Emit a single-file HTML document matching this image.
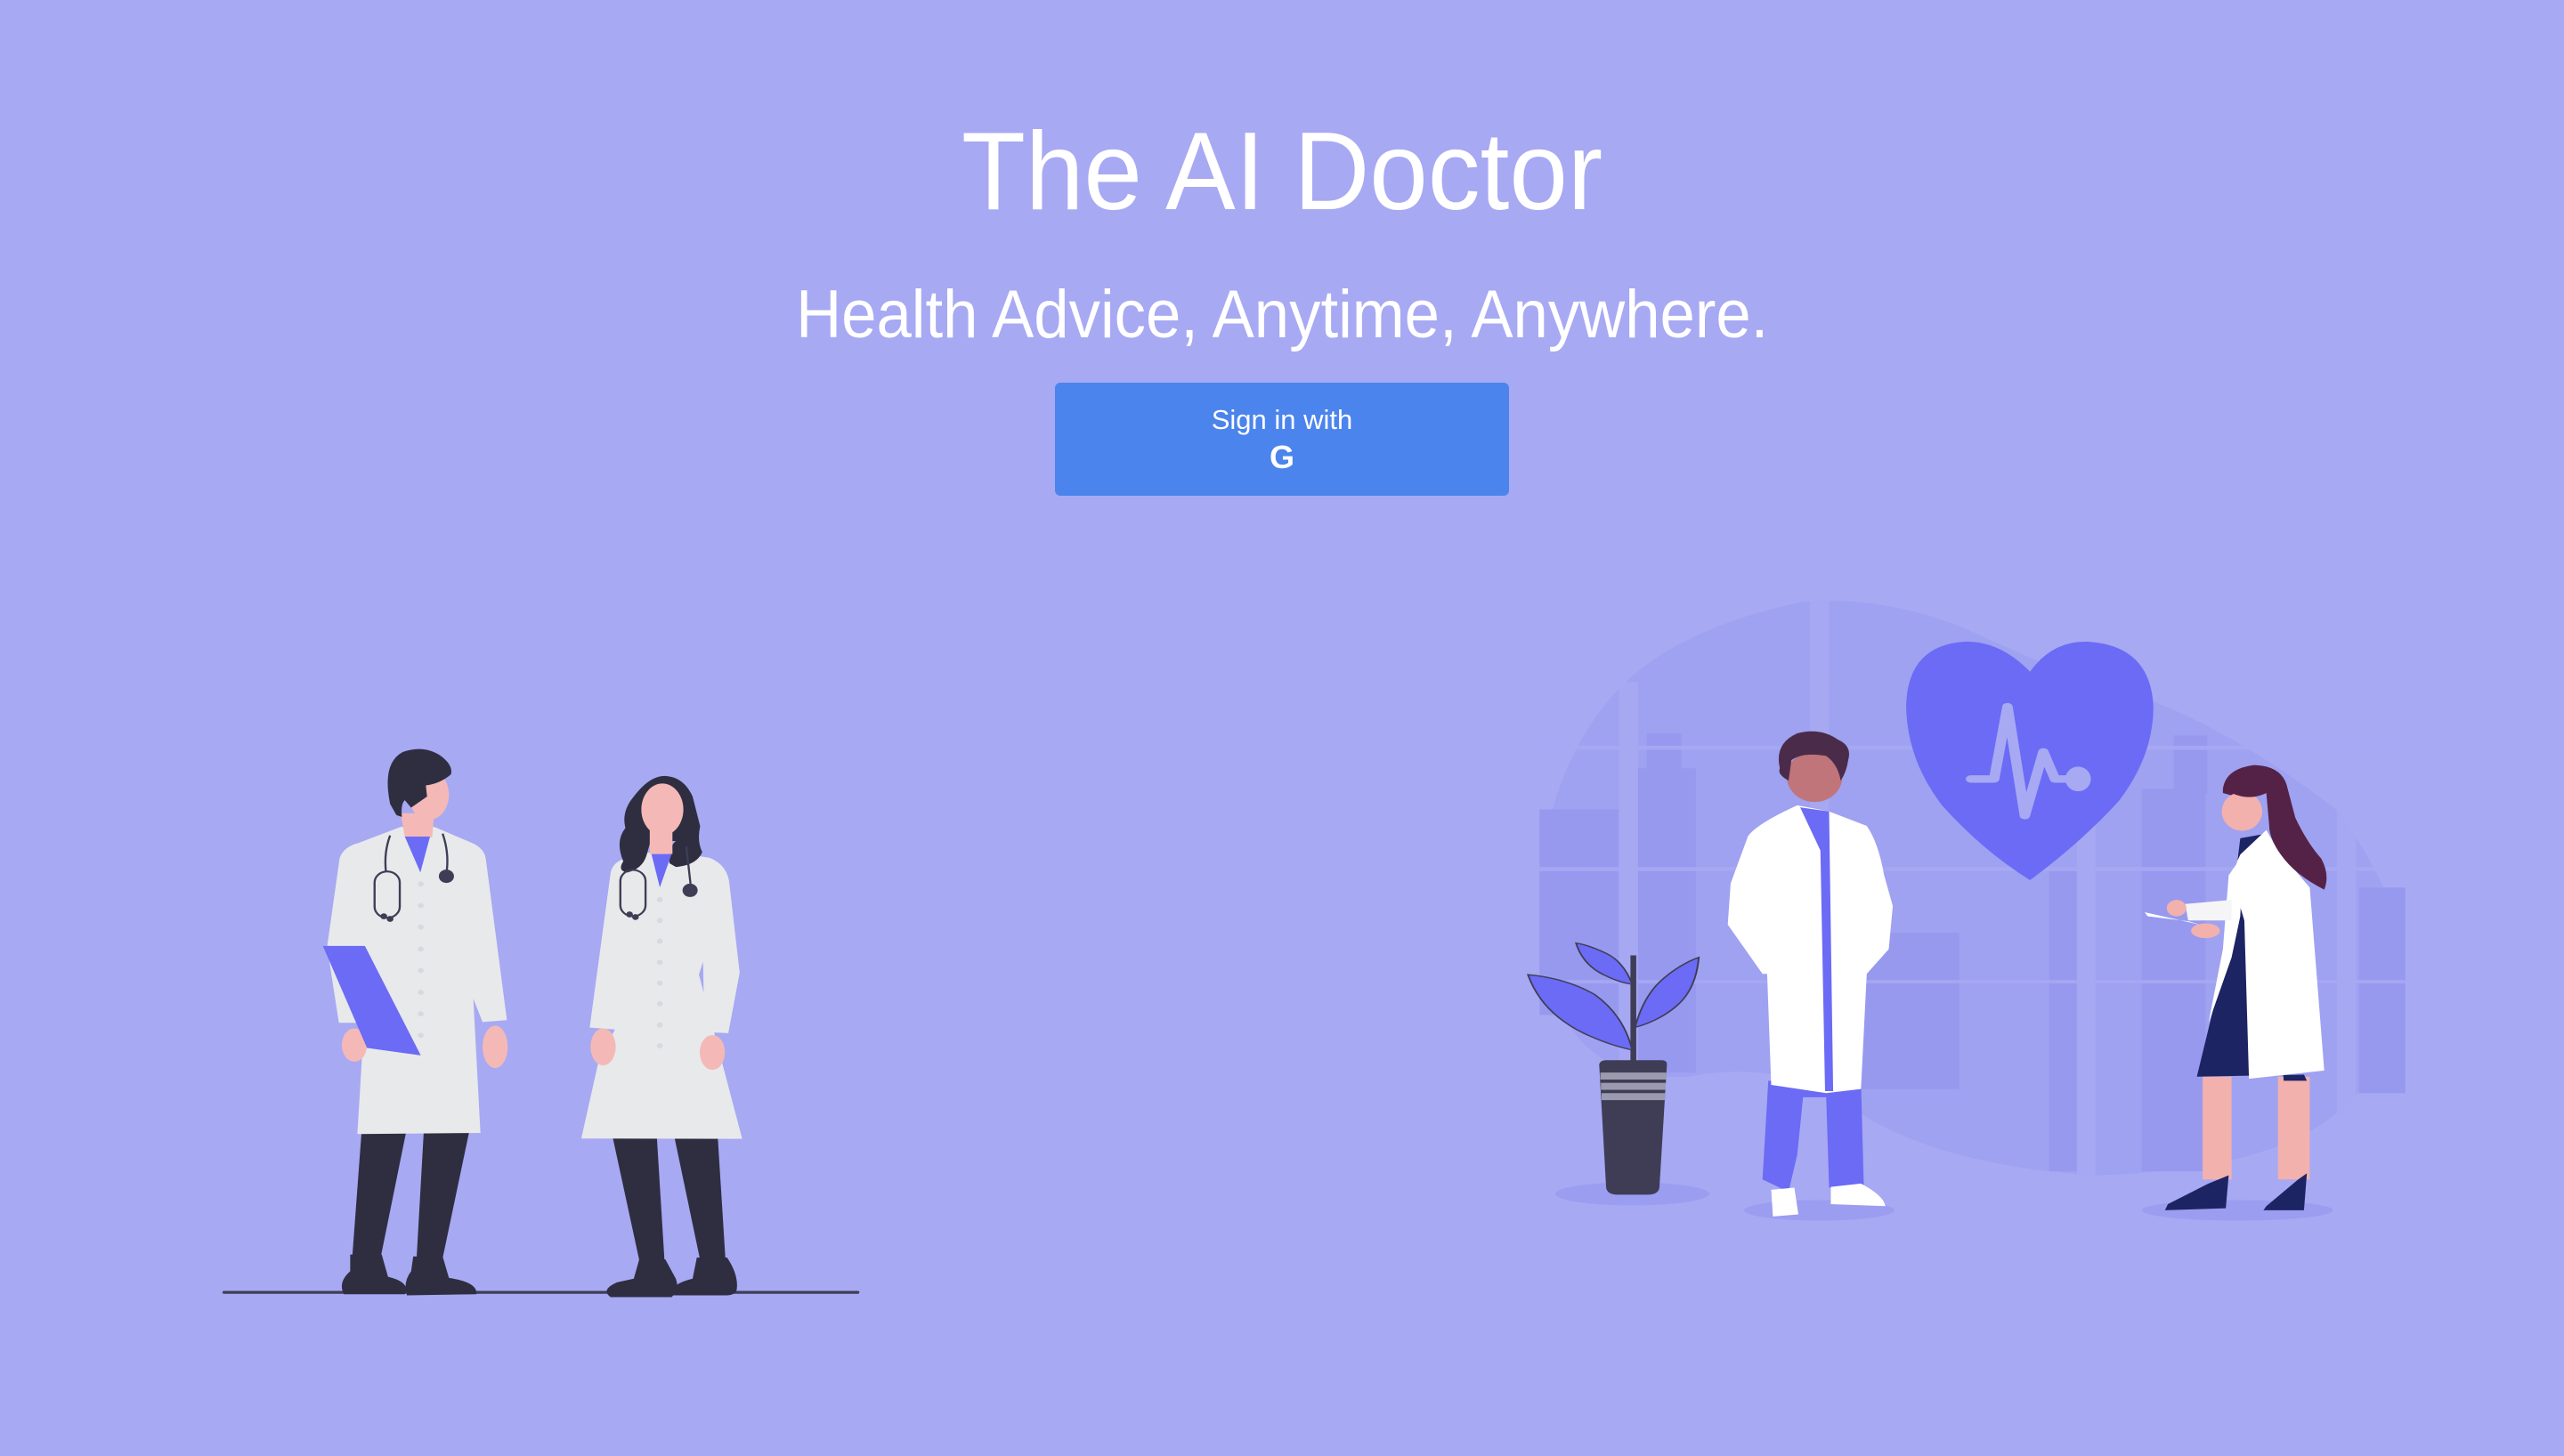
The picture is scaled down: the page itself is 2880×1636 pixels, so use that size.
<!DOCTYPE html>
<html><head><meta charset="utf-8">
<style>
html,body{margin:0;padding:0;}
body{width:2880px;height:1636px;background:#a7a9f3;position:relative;overflow:hidden;font-family:"Liberation Sans","DejaVu Sans",sans-serif;color:#fff;}
.t{position:absolute;left:0;width:2880px;text-align:center;white-space:nowrap;}
.t span{display:inline-block;}
#h1{top:118px;font-size:124px;line-height:150px;}
#h1 span{transform:scaleX(0.95);}
#h2{top:304px;font-size:76px;line-height:100px;}
#h2 span{transform:scaleX(0.93);}
#btn{position:absolute;left:1185px;top:430px;width:510px;height:127px;background:#4b84ec;border-radius:6px;text-align:center;}
#btn .a{position:absolute;top:22px;left:0;width:100%;font-size:31px;line-height:40px;}
#btn .g{position:absolute;top:62px;left:0;width:100%;font-size:36px;line-height:44px;font-weight:bold;}
svg{position:absolute;left:0;top:0;}
</style></head><body>
<div class="t" id="h1"><span>The AI Doctor</span></div>
<div class="t" id="h2"><span>Health Advice, Anytime, Anywhere.</span></div>
<div id="btn"><div class="a">Sign in with</div><div class="g">G</div></div>

<svg width="2880" height="1636" viewBox="0 0 2880 1636">
<g transform="translate(240,820) scale(0.4719,0.4167)">
  <line x1="25" y1="1517" x2="1533" y2="1517" stroke="#3f3d56" stroke-width="8" stroke-linecap="round"/>
  <polygon points="352,1085 458,1085 398,1420 330,1420" fill="#2f2e41"/>
  <polygon points="500,1085 608,1085 545,1425 483,1425" fill="#2f2e41"/>
  <path d="M325 1415 L400 1415 L415 1475 Q470 1490 455 1522 L310 1522 Q295 1490 325 1460 Z" fill="#2f2e41"/>
  <path d="M475 1420 L545 1420 L560 1478 Q630 1490 625 1522 L460 1525 Q450 1490 470 1460 Z" fill="#2f2e41"/>
  <path d="M300 345 Q310 315 345 305 L445 262 L525 262 L615 305 Q645 320 648 350 L698 783 L640 788 L618 725 L635 1087 L342 1090 L358 790 L298 790 L270 585 Z" fill="#e8e9eb"/>
  <ellipse cx="335" cy="850" rx="30" ry="45" fill="#f4b9b6"/>
  <ellipse cx="670" cy="855" rx="30" ry="57" fill="#f4b9b6"/>
  <polygon points="260,583 360,583 493,878 365,858" fill="#6b6bf5"/>
  <path d="M445 225 L525 225 L520 290 L455 290 Z" fill="#f4b9b6"/>
  <polygon points="455,288 515,288 492,385" fill="#6b6bf5"/>
  <ellipse cx="512" cy="175" rx="48" ry="68" fill="#f4b9b6"/>
  <path d="M420 200 Q400 90 450 60 Q500 40 540 70 Q570 95 565 120 Q540 145 505 150 L508 180 L470 210 L455 190 Q445 200 448 235 L435 230 Z" fill="#2f2e41"/>
  <g fill="#d8d9de"><circle cx="493" cy="416" r="7"/><circle cx="493" cy="474" r="7"/><circle cx="493" cy="532" r="7"/><circle cx="493" cy="591" r="7"/><circle cx="493" cy="649" r="7"/><circle cx="493" cy="708" r="7"/><circle cx="493" cy="766" r="7"/><circle cx="493" cy="824" r="7"/></g>
  <g stroke="#3f3d56" stroke-width="5" fill="none"><path d="M420 285 Q405 330 410 382"/><rect x="383" y="382" width="60" height="125" rx="30"/><path d="M545 280 Q560 330 555 378"/></g>
  <circle cx="554" cy="395" r="18" fill="#3f3d56"/><circle cx="405" cy="503" r="8" fill="#3f3d56"/><circle cx="420" cy="510" r="8" fill="#3f3d56"/>
  <polygon points="950,1100 1055,1100 1073,1430 1013,1430" fill="#2f2e41"/>
  <polygon points="1097,1100 1200,1100 1218,1425 1157,1425" fill="#2f2e41"/>
  <path d="M1013 1428 L1075 1428 L1100 1480 Q1110 1510 1090 1530 L945 1530 Q920 1510 960 1490 L1000 1480 Z" fill="#2f2e41"/>
  <path d="M1150 1423 L1222 1423 Q1250 1470 1245 1510 Q1240 1525 1220 1525 L1090 1525 Q1085 1495 1140 1480 Z" fill="#2f2e41"/>
  <path d="M945 385 Q950 355 985 345 L1040 330 L1090 330 L1180 345 Q1225 365 1228 420 L1252 655 L1225 818 L1168 815 L1165 625 L1155 660 L1258 1103 L875 1102 L915 900 L955 808 L895 803 Z" fill="#e8e9eb"/>
  <ellipse cx="927" cy="855" rx="30" ry="50" fill="#f4b9b6"/>
  <ellipse cx="1187" cy="870" rx="30" ry="47" fill="#f4b9b6"/>
  <path d="M1000 180 Q1040 120 1080 125 Q1120 130 1140 180 L1158 260 Q1150 300 1163 330 Q1150 365 1100 370 L1085 360 Q1080 320 1100 300 L1040 300 L1030 340 Q1020 375 985 385 Q960 380 975 355 Q955 300 980 265 Q970 220 1000 180 Z" fill="#2f2e41"/>
  <rect x="1038" y="270" width="54" height="65" fill="#f4b9b6"/>
  <ellipse cx="1068" cy="215" rx="50" ry="70" fill="#f4b9b6"/>
  <polygon points="1042,335 1090,335 1062,425" fill="#6b6bf5"/>
  <g fill="#d8d9de"><circle cx="1062" cy="458" r="7"/><circle cx="1062" cy="514" r="7"/><circle cx="1062" cy="570" r="7"/><circle cx="1062" cy="627" r="7"/><circle cx="1062" cy="683" r="7"/><circle cx="1062" cy="739" r="7"/><circle cx="1062" cy="796" r="7"/><circle cx="1062" cy="852" r="7"/></g>
  <g stroke="#3f3d56" stroke-width="5" fill="none"><rect x="968" y="378" width="60" height="125" rx="30"/><path d="M1125 315 L1135 415"/></g>
  <circle cx="1134" cy="433" r="18" fill="#3f3d56"/><circle cx="990" cy="498" r="8" fill="#3f3d56"/><circle cx="1004" cy="505" r="8" fill="#3f3d56"/>
</g>

<g transform="translate(1700,660) scale(0.6505,0.462)">
  <path d="M180 250 Q280 100 500 35 Q640 20 780 100 Q900 180 1000 230 Q1200 300 1420 540 Q1560 800 1530 1000 Q1500 1200 1420 1280 Q1300 1420 1000 1430 Q700 1400 560 1240 Q450 1150 300 1190 Q150 1200 90 1050 Q30 900 50 650 Q80 400 180 250 Z" fill="#9fa1f1"/>
  <g fill="#9799ef">
    <rect x="230" y="355" width="60" height="820"/><rect x="215" y="440" width="100" height="740"/>
    <rect x="45" y="540" width="137" height="500"/><rect x="600" y="840" width="170" height="380"/>
    <rect x="1085" y="490" width="110" height="930"/><rect x="1140" y="360" width="58" height="140"/>
    <rect x="1460" y="730" width="80" height="500"/><rect x="925" y="680" width="50" height="740"/>
  </g>
  <g fill="#a7a9f3" opacity="0.9">
    <rect x="182" y="230" width="33" height="1000"/><rect x="512" y="20" width="33" height="1200"/>
    <rect x="973" y="220" width="32" height="1220"/><rect x="1422" y="540" width="33" height="740"/>
    <rect x="40" y="385" width="1500" height="10"/><rect x="40" y="680" width="1500" height="10"/><rect x="40" y="955" width="1500" height="8"/>
  </g>
  <path d="M892 205 Q840 130 780 132 Q680 140 678 290 Q680 420 740 530 Q810 640 892 712 Q980 620 1045 520 Q1105 410 1105 290 Q1100 140 990 132 Q930 130 892 205 Z" fill="#6b6bf5"/>
  <polyline points="790,466 830,466 853,290 883,555 915,400 935,466 965,466" fill="none" stroke="#a7a9f3" stroke-width="18" stroke-linecap="round" stroke-linejoin="round"/>
  <ellipse cx="975" cy="466" rx="22" ry="30" fill="#a7a9f3"/>
  <ellipse cx="205" cy="1475" rx="133" ry="28" fill="#9b9df0"/>
  <ellipse cx="528" cy="1515" rx="130" ry="25" fill="#9b9df0"/>
  <ellipse cx="1250" cy="1515" rx="165" ry="25" fill="#9b9df0"/>
  <rect x="202" y="895" width="10" height="260" fill="#3f3d56"/>
  <path d="M205 1125 Q190 1040 140 990 Q90 950 25 942 Q50 1040 130 1090 Q170 1115 205 1125 Z" fill="#6b6bf5" stroke="#3f3d56" stroke-width="3"/>
  <path d="M205 965 Q190 910 160 890 Q130 870 108 865 Q120 920 160 945 Q185 962 205 965 Z" fill="#6b6bf5" stroke="#3f3d56" stroke-width="3"/>
  <path d="M210 1070 Q225 990 260 950 Q290 915 320 900 Q315 980 280 1020 Q250 1055 210 1070 Z" fill="#6b6bf5" stroke="#3f3d56" stroke-width="3"/>
  <path d="M148 1160 Q150 1150 160 1150 L255 1150 Q265 1150 265 1160 L252 1460 Q250 1477 232 1477 L180 1477 Q162 1477 160 1460 Z" fill="#3f3d56"/>
  <g fill="#9b9bb0"><rect x="150" y="1180" width="114" height="17"/><rect x="151" y="1205" width="112" height="17"/><rect x="152" y="1230" width="110" height="17"/></g>
  <path d="M440 1200 L600 1200 L605 1460 L545 1460 L540 1240 L500 1240 L490 1380 L475 1470 L430 1440 Z" fill="#6b6bf5"/>
  <path d="M445 1465 L485 1460 L492 1525 L448 1530 Z" fill="#fff"/>
  <path d="M548 1458 L600 1450 Q640 1480 642 1505 L548 1500 Z" fill="#fff"/>
  <path d="M405 605 Q420 575 490 530 L545 545 L610 580 Q630 620 640 700 L655 775 L648 880 L610 940 L600 1220 L540 1230 L445 1210 L438 940 L430 940 L370 820 L375 720 Z" fill="#fff"/>
  <polygon points="495,535 545,545 552,1225 538,1225 530,640" fill="#6b6bf5"/>
  <ellipse cx="520" cy="460" rx="48" ry="62" fill="#c0757a"/>
  <path d="M460 440 Q450 380 490 355 Q530 340 560 370 Q585 385 578 420 Q575 450 565 470 Q560 430 540 410 Q500 400 480 420 L475 470 Q455 455 460 440 Z" fill="#4a2c4a"/>
  <rect x="1190" y="1190" width="50" height="250" fill="#f2b1ad"/>
  <rect x="1320" y="1190" width="55" height="250" fill="#f2b1ad"/>
  <path d="M1130 1500 L1200 1450 L1235 1430 L1230 1510 L1125 1515 Z" fill="#1d2463"/>
  <path d="M1300 1505 L1355 1440 L1370 1425 L1365 1515 L1295 1515 Z" fill="#1d2463"/>
  <path d="M1255 610 L1295 600 L1330 1200 L1370 1200 L1365 1185 L1180 1190 L1230 900 Z" fill="#1d2463"/>
  <path d="M1300 590 L1320 640 L1375 730 L1400 1175 L1270 1195 L1262 810 L1245 730 Q1240 690 1255 650 Z" fill="#fff"/>
  <path d="M1260 650 L1235 700 L1225 880 L1200 1060 L1240 900 L1255 800 Z" fill="#fff"/>
  <path d="M1160 770 L1240 760 L1240 810 L1165 810 Z" fill="#f5f5f7"/>
  <path d="M1090 790 L1190 822 L1165 812 L1095 800 Z" fill="#fff"/>
  <ellipse cx="1145" cy="780" rx="17" ry="20" fill="#f2b1ad"/>
  <ellipse cx="1195" cy="835" rx="25" ry="18" fill="#f2b1ad"/>
  <path d="M1225 490 Q1230 440 1280 432 Q1325 435 1335 480 L1350 560 Q1370 620 1395 660 Q1410 700 1400 735 Q1350 700 1325 650 Q1305 610 1305 580 L1300 500 Q1270 520 1225 500 Z" fill="#542247"/>
  <ellipse cx="1258" cy="545" rx="35" ry="47" fill="#f2b1ad"/>
  <path d="M1238 480 Q1270 470 1300 500 Q1270 520 1240 500 Z" fill="#542247"/>
</g>
</svg>
</body></html>
